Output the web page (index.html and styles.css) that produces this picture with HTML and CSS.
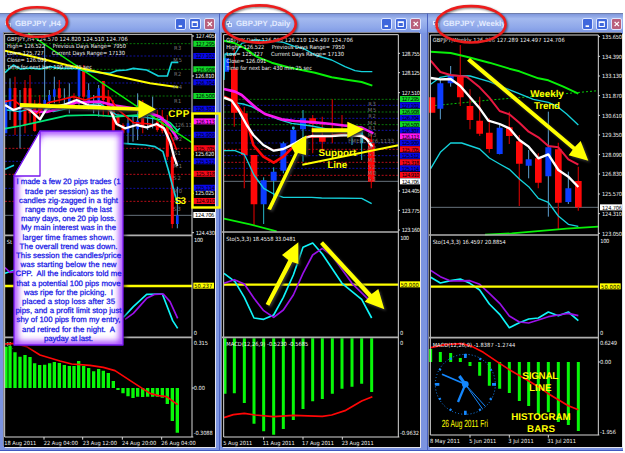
FILE: index.html
```html
<!DOCTYPE html>
<html lang="en">
<head>
<meta charset="utf-8">
<title>GBPJPY charts</title>
<link rel="stylesheet" href="styles.css">
</head>
<body>
<main class="desktop">
<section class="window w1">
<header class="titlebar"><svg class="appicon" viewBox="0 0 8 8"><path d="M1 1h4v2h2v4H3V5H1z" fill="#dfe9ff"/><path d="M2 3l2-1M4 5h2" stroke="#3b5baa" fill="none"/></svg><span class="title">GBPJPY ,H4</span>
<span class="buttons"><i class="btn"><svg viewBox="0 0 11 11"><path d="M3 8h4" stroke-width="2"/></svg></i><i class="btn"><svg viewBox="0 0 11 11"><path d="M2.5 3h6v5.5h-6zM2.5 3.6h6"/></svg></i><i class="btn close"><svg viewBox="0 0 11 11"><path d="M3 3l5 5M8 3l-5 5" stroke-width="1.5"/></svg></i></span></header>
<svg class="chart" viewBox="12 99 633 1242">
<g class="dash green"><path d="M15 131H576M15 208H576M15 288H576"/></g>
<g class="dash blue"><path d="M15 168H576M15 249H576M15 326H576M15 406H576M15 484H576M15 565H576"/></g>
<g class="dash red"><path d="M15 445H576M15 523H576M15 604H576"/></g>
<path class="gridline" d="M15 646H576"/>
<path class="wick" d="M30 235V360M60 270V445M134 130V330M148 270V330M163 230V310M193 265V330M208 250V340M237 200V320M266 250V330M281 285V340M296 255V350M384 350V430M399 350V425M413 280V420M443 320V390M458 290V385M532 560V685"/>
<path class="wickred" d="M45 230V405M75 240V400M90 225V370M104 300V395M119 285V360M178 240V310M222 280V325M251 195V330M310 245V350M325 270V345M340 300V395M354 340V380M369 370V400M428 300V400M472 330V395M487 330V400M502 345V480M517 430V685"/>
<path class="up" d="M18 300V400M30 265V330M60 330V360M134 300V325M148 285V302M163 268V290M208 290V318M237 208V288M266 270V310M296 265V300M384 370V398M413 362V388M532 646V672"/>
<path class="down" d="M45 264V380M75 264V375M90 265V340M104 325V393M119 310V335M178 265V295M251 208V290M310 243V300M325 292V330M340 310V392M354 350V370M369 375V400M428 350V382M472 365V390M487 350V392M502 370V470M517 470V672"/>
<path class="ln cyan" d="M15 218L40 195 62 207 90 204 120 207 150 200 180 205 230 205 250 212 300 218 330 220 350 212 380 210 400 205 440 210 475 228 502 228 515 187 535 187M15 508L42 496M369 430L436 435 465 440 489 455 505 510 517 555 532 610"/>
<path class="ln cyan thin" d="M20 330L60 335 110 320 160 335 230 320 300 310 350 345 420 350 490 360 520 400 540 385"/>
<path class="ln spring" d="M15 386L60 378 110 367 200 347 280 345 350 350 430 344 470 348 510 368 535 395"/>
<path class="ln magenta" d="M70 320L100 335 140 336 180 325 230 307 300 305 340 316 400 325 440 335 480 350 510 378 533 418"/>
<path class="ln red" d="M15 305L40 300 75 325 110 342 145 308 180 300 220 290 255 300 290 290 330 292 350 325 400 368 450 372 490 385 510 400 530 450"/>
<path class="ln white" d="M15 315L40 330 70 320 90 330 120 358 140 325 190 315 230 300 270 318 300 318 330 330 350 372 375 385 410 375 440 382 470 372 492 385 510 425 522 470 532 498"/>
<path d="M85 100L415 322 576 428" class="ln lime thin"/>
<path d="M15 152L100 170 200 195 290 215 380 235 450 250 535 262" class="ln yellow"/>
<g class="lv"><text x="522" y="149" textLength="22">R3</text><text x="520" y="187" textLength="26">M5</text><text x="522" y="227" textLength="22">R2</text><text x="520" y="267" textLength="26">M4</text><text x="522" y="308" textLength="22">R1</text><text x="524" y="382" textLength="52">126.11</text><text x="520" y="423" textLength="26">M2</text><text x="522" y="465" textLength="20">S1</text><text x="520" y="503" textLength="26">M1</text><text x="520" y="541" textLength="22">S2</text><text x="520" y="580" textLength="26">M0</text><text x="520" y="634" textLength="22">S3</text></g>
<g class="info"><text x="21" y="123" textLength="362">GBPJPY,H4  124.570 124.820 124.510 124.706</text><text x="21" y="143" textLength="114">High= 126.522</text><text x="158" y="143" textLength="220">Previous Days Range= 7950</text><text x="21" y="165" textLength="110">Low= 125.727</text><text x="155" y="165" textLength="220">Current Days Range= 17130</text><text x="21" y="187" textLength="120">Close= 126.091</text><text x="21" y="208" textLength="255">Time for next bar: 190 min 25 sec</text><text x="20" y="732">St</text><text x="20" y="1038">M</text></g>
<path d="M60 309L415 322V299L468 328 415 356V332L60 321Z" class="arrow"/>
<text x="505" y="350" class="tag" textLength="63">CPP</text><text x="524" y="613" class="tag" textLength="34">S3</text>
<path d="M18 1025L42 1050" class="ln green dashln"/>
<path d="M15 858H576" class="mid"/>
<path class="ln cyan sto" d="M15 820L42 811M370 952L400 920 440 883 487 882 518 962 533 985"/>
<path class="ln purple sto" d="M15 803L30 817 44 815M375 958L400 940 440 895 465 883 490 882 510 905 533 955"/>
<path class="bars" d="M18 1164V1040M30 1164V1038M45 1164V1057M60 1164V1070M75 1164V1065M90 1164V1071M104 1164V1090M119 1164V1095M134 1164V1094M149 1164V1090M163 1164V1086M178 1164V1089M193 1164V1095M208 1164V1098M222 1164V1098M236 1164V1083M251 1164V1098M266 1164V1104M281 1164V1114M296 1164V1107M310 1164V1112M325 1164V1119M340 1164V1143M354 1164V1170M369 1164V1180M384 1164V1189M399 1164V1194M413 1164V1190M428 1164V1191M443 1164V1190M458 1164V1190M472 1164V1190M487 1164V1193M502 1164V1212M517 1164V1263M532 1164V1298"/>
<path class="ln red sto" d="M15 1032L45 1030 80 1040 120 1065 180 1083 215 1092 270 1096 310 1102 345 1112 400 1148 450 1180 475 1187 500 1190 520 1205 533 1214"/>
<path class="frame" d="M14 1311V103H576V1311M14 1311H580M576 108h6M576 228h6M576 462h6M576 580h6M576 698h6M576 1164h6M132 1311v8M248 1311v8M367 1311v8M485 1311v8"/>
<path class="split" d="M12 706H576M12 1012H576"/>
<g class="box"><path class="bg" d="M580 131h67M580 208h67M580 288h67"/><path class="bb" d="M580 168h67M580 247h67M580 326h67M580 404h67M580 484h67M580 563h67"/><path class="br" d="M580 445h67M580 521h67M580 603h67"/><path class="bm" d="M580 364h67"/><path class="bw" d="M580 645h67"/><path class="by" d="M580 857h62"/></g>
<g class="axis dark"><text x="587" y="138" textLength="58">127.295</text><text x="587" y="175" textLength="58">127.102</text><text x="587" y="215" textLength="58">126.908</text><text x="587" y="254" textLength="58">126.704</text><text x="587" y="295" textLength="58">126.500</text><text x="587" y="333" textLength="58">126.307</text><text x="587" y="371" textLength="58">126.113</text><text x="587" y="411" textLength="58">125.909</text><text x="587" y="452" textLength="58">125.705</text><text x="587" y="491" textLength="58">125.512</text><text x="587" y="528" textLength="58">125.318</text><text x="587" y="570" textLength="58">125.114</text><text x="587" y="610" textLength="58">124.910</text><text x="585" y="652" textLength="58">124.706</text><text x="583" y="864" textLength="54">50.237</text></g>
<g class="axis"><text x="587" y="115" textLength="58">127.405</text><text x="585" y="234" textLength="58">126.810</text><text x="585" y="468" textLength="58">125.620</text><text x="585" y="586" textLength="58">125.025</text><text x="587" y="705" textLength="58">124.430</text><text x="582" y="726" textLength="27">100</text><text x="581" y="1004">0</text><text x="581" y="1034" textLength="43">0.315</text><text x="581" y="1171" textLength="34">0.00</text><text x="581" y="1306" textLength="57">-0.3088</text>
<text x="13" y="1335" textLength="96">18 Aug 2011</text><text x="131" y="1335" textLength="103">22 Aug 04:00</text><text x="248" y="1335" textLength="103">23 Aug 12:00</text><text x="366" y="1335" textLength="103">24 Aug 20:00</text><text x="484" y="1335" textLength="103">26 Aug 04:00</text></g>
</svg>
</section>
<section class="window w2">
<header class="titlebar"><svg class="appicon" viewBox="0 0 8 8"><path d="M1 1h4v2h2v4H3V5H1z" fill="#dfe9ff"/><path d="M2 3l2-1M4 5h2" stroke="#3b5baa" fill="none"/></svg><span class="title">GBPJPY ,Daily</span>
<span class="buttons"><i class="btn"><svg viewBox="0 0 11 11"><path d="M3 8h4" stroke-width="2"/></svg></i><i class="btn"><svg viewBox="0 0 11 11"><path d="M2.5 3h6v5.5h-6zM2.5 3.6h6"/></svg></i><i class="btn close"><svg viewBox="0 0 11 11"><path d="M3 3l5 5M8 3l-5 5" stroke-width="1.5"/></svg></i></span></header>
<svg class="chart" viewBox="21 99 594 1242">
<g class="dash green"><path d="M27 298H550M27 336H550M27 374H550"/></g>
<g class="dash blue"><path d="M27 316H550M27 355H550M27 391H550M27 429H550M27 467H550M27 505H550"/></g>
<g class="dash red"><path d="M27 448H550M27 487H550M27 526H550"/></g>
<path class="gridline" d="M27 544H550"/>
<path class="wickcy" d="M146 532V672M176 502V615M205 425V520M235 380V445M264 330V485M411 385V435M440 385V480"/>
<path class="wickred" d="M58 150V380M88 320V565M117 465V678M293 345V460M322 350V455M352 298V430M381 345V410M469 400V565"/>
<path class="up wide" d="M33 175V215M146 541V613M176 515V542M205 430V512M235 390V440M264 355V388"/>
<path class="down wide" d="M58 208V338M88 340V465M117 465V613M293 355V372M322 405V425M469 430V545"/>
<path class="wickcy thick" d="M235 380V388M440 392V430"/>
<path class="ln cyan thin" d="M27 240L30 162 60 162 80 130 120 120 180 125 205 127 240 140 265 145 300 165 350 180 390 200 420 212 440 215 472 215M55 308L85 312 110 320 150 342 190 358 230 370 290 378 350 390 440 402 470 430M27 452L60 452 88 463 117 525 146 565 176 582 205 592 290 592 320 594 440 595 470 611"/>
<path class="ln lime w6" d="M27 122L60 130 90 145 125 170 170 188 220 202 260 210 300 218 350 232 400 240 440 246 472 257"/>
<path class="ln lime" d="M27 656L105 673 185 694"/>
<path class="ln red w8" d="M27 290L60 305 95 360 115 435 145 470 176 488 205 470 240 435 280 410 350 408 380 402 440 408 472 425"/>
<path class="ln white" d="M27 293L50 302 70 330 95 375 115 405 145 435 176 452 205 447 240 430 265 415 290 408 350 408 390 405 440 408 455 418 472 440"/>
<path class="ln magenta w8" d="M27 267L60 275 80 285 100 303 125 325 150 342 200 358 240 363 300 367 350 372 400 378 440 383 475 400"/>
<g class="lv"><text x="460" y="317" textLength="22">R3</text><text x="458" y="335" textLength="26">M5</text><text x="460" y="354" textLength="22">R2</text><text x="458" y="374" textLength="26">M4</text><text x="460" y="391" textLength="22">R1</text><text x="458" y="411" textLength="26">M3</text><text x="400" y="430" textLength="137">FMEEL 126.1133</text><text x="458" y="450" textLength="26">M2</text><text x="460" y="468" textLength="22">S1</text><text x="458" y="487" textLength="26">M1</text><text x="460" y="506" textLength="22">S2</text><text x="458" y="524" textLength="26">M0</text><text x="460" y="544" textLength="22">S3</text></g>
<g class="info"><text x="34" y="125" textLength="380">GBPJPY,Daily  126.095 126.210 124.497 124.706</text><text x="34" y="146" textLength="114">High= 126.522</text><text x="170" y="146" textLength="219">Previous Days Range= 7950</text><text x="34" y="167" textLength="110">Low= 125.727</text><text x="168" y="167" textLength="219">Current Days Range= 17130</text><text x="34" y="190" textLength="120">Close= 126.091</text><text x="34" y="211" textLength="257">Time for next bar: 430 min 25 sec</text><text x="34" y="724" textLength="208">Sto(5,3,3) 18.4558 33.0481</text></g>
<path d="M262 494L550 436" class="yl w6"/>
<path d="M157 627L239 459 228 438 274 406 273 465 249 459 168 630Z" class="arrow"/>
<path d="M290 385H397V365L447 388 397 414V397H290Z" class="arrow"/>
<g class="tag" text-anchor="middle"><text x="367" y="468" textLength="113">Support</text><text x="367" y="503" textLength="59">Line</text></g>
<path d="M27 854H550" class="mid"/>
<path class="ln cyan sto" d="M27 820L60 845 88 892 117 954 146 958 176 945 205 892 235 825 264 742 293 729 322 762 381 850 440 898 470 954"/>
<path class="ln purple sto" d="M27 850L58 839 88 852 117 895 146 932 176 952 205 930 235 885 264 820 293 765 322 745 352 768 411 850 460 898"/>
<path d="M152 912L220 780 201 765 250 727V792L232 786 163 917Z" class="arrow"/><path d="M324 724L470 882 490 867 508 928 449 905 461 892 315 732Z" class="arrow"/>
<path class="bars wideb" d="M30 1015V1181M58 1015V1180M88 1015V1209M117 1015V1271M146 1015V1294M176 1015V1304M205 1015V1287M235 1015V1260M264 1015V1227M293 1015V1204M322 1015V1197M352 1015V1181M381 1015V1166M411 1015V1160M440 1015V1151M470 1015V1176"/>
<path class="ln red sto" d="M27 1253L55 1244 88 1240 120 1245 175 1250 235 1246 322 1249 350 1245 390 1232 440 1203 472 1190"/>
<text class="info" x="34" y="1038" textLength="246">MACD(12,26,9) -0.5230 -0.5685</text>
<path class="frame" d="M26 1311V104H550V1311M26 1311H553M550 160h5M550 218h5M550 278h5M550 573h5M550 631h5M550 690h5M146 1311v8M264 1311v8M382 1311v8"/>
<path class="split" d="M21 696H550M21 1012H550"/>
<g class="box"><path class="bg" d="M555 297h67M555 335h67M555 373h67"/><path class="bb" d="M555 316h67M555 354h67M555 391h67M555 429h67M555 467h67M555 505h67"/><path class="br" d="M555 448h67M555 487h67M555 525h67"/><path class="bm" d="M555 409h67"/><path class="bw" d="M555 544h67"/><path class="by" d="M555 853h61"/></g>
<g class="axis dark"><text x="560" y="304" textLength="53">127.295</text><text x="560" y="323" textLength="53">127.102</text><text x="560" y="342" textLength="53">126.908</text><text x="560" y="361" textLength="53">126.704</text><text x="560" y="380" textLength="53">126.500</text><text x="560" y="398" textLength="53">126.307</text><text x="560" y="416" textLength="53">126.113</text><text x="560" y="436" textLength="53">125.909</text><text x="560" y="455" textLength="53">125.705</text><text x="560" y="474" textLength="53">125.512</text><text x="560" y="494" textLength="53">125.318</text><text x="560" y="512" textLength="53">125.114</text><text x="560" y="532" textLength="53">124.910</text><text x="560" y="551" textLength="53">124.706</text><text x="557" y="860" textLength="54">50.000</text></g>
<g class="axis"><text x="560" y="167" textLength="55">128.755</text><text x="560" y="225" textLength="55">128.125</text><text x="560" y="285" textLength="55">127.510</text><text x="560" y="580" textLength="55">124.405</text><text x="560" y="638" textLength="55">123.775</text><text x="560" y="697" textLength="55">123.160</text><text x="556" y="719" textLength="26">100</text><text x="555" y="1004">0</text><text x="555" y="1034">0</text><text x="555" y="1306" textLength="57">-0.9632</text>
<text x="25" y="1335" textLength="87">5 Aug 2011</text><text x="143" y="1335" textLength="96">11 Aug 2011</text><text x="261" y="1335" textLength="96">17 Aug 2011</text><text x="380" y="1335" textLength="96">23 Aug 2011</text></g>
</svg>
</section>
<section class="window w3">
<header class="titlebar"><svg class="appicon" viewBox="0 0 8 8"><path d="M1 1h4v2h2v4H3V5H1z" fill="#dfe9ff"/><path d="M2 3l2-1M4 5h2" stroke="#3b5baa" fill="none"/></svg><span class="title">GBPJPY ,Weekly</span>
<span class="buttons"><i class="btn"><svg viewBox="0 0 11 11"><path d="M3 8h4" stroke-width="2"/></svg></i><i class="btn"><svg viewBox="0 0 11 11"><path d="M2.5 3h6v5.5h-6zM2.5 3.6h6"/></svg></i><i class="btn close"><svg viewBox="0 0 11 11"><path d="M3 3l5 5M8 3l-5 5" stroke-width="1.5"/></svg></i></span></header>
<svg class="chart" viewBox="27 99 579 1242">
<path class="gridline" d="M32 622H535"/>
<path class="ln lime thin dashln" d="M32 318L210 300 380 286 535 272"/>
<path class="wick" d="M61 240V358M92 198V260M239 375V463M326 450V535M385 335V650M445 515V612"/>
<path class="wickred" d="M121 135V318M150 268V388M179 290V408M208 355V458M268 335V432M298 405V618M355 460V565M415 428V688M475 500V632"/>
<path class="up wide" d="M61 250V326M92 228V250M239 383V462M326 478V497M385 442V529M445 565V606"/>
<path class="down wide" d="M36 292V338M121 230V292M150 318V360M179 362V401M208 398V447M268 382V408M298 424V491M355 475V548M415 448V608M475 543V622"/>
<path class="ln cyan thin" d="M32 253L61 232 92 226 150 228 208 245 250 262 290 278 340 298 385 307 410 318 440 342 475 375M32 506L61 457 92 429 125 429 179 447 208 474 239 492 268 508 298 537 326 560 355 595 385 607 415 648 445 673 475 679"/>
<path class="ln lime" d="M195 704L275 700 380 691 440 686 535 680"/>
<path class="ln lime w6" d="M32 155L92 159 140 170 208 188 268 206 298 214 355 235 385 241 430 260 475 281"/>
<path class="ln crimson" d="M32 182L61 216 92 225 140 230 179 262 208 293 239 333 268 343 298 368 326 395 355 412 385 438 415 442 445 478 475 494"/>
<path class="ln white" d="M32 234L61 238 92 237 121 258 150 292 179 325 205 362 239 372 268 385 298 420 326 440 355 475 385 463 415 510 445 530 475 561"/>
<text class="info" x="38" y="125" textLength="396">GBPJPY,Weekly  126.236 127.289 124.497 124.706</text>
<path d="M150 174L465 440 482 423 505 482 446 466 458 449 141 182Z" class="arrow"/>
<g class="tag" text-anchor="middle"><text x="381" y="291" textLength="101">Weekly</text><text x="381" y="327" textLength="78">Trend</text></g>
<text class="info" x="38" y="733" textLength="219">Sto(14,3,3) 16.4597 20.8854</text>
<path class="ln cyan sto" d="M32 832L61 849 92 842 121 837 150 850 179 870 208 912 239 943 268 983 298 968 326 957 355 954 385 936 415 947 445 936 475 962"/>
<path class="ln purple sto" d="M32 811L61 830 92 843 150 842 179 853 208 880 239 910 268 948 298 966 326 969 355 960 385 950 415 945 445 940 475 947"/>
<path d="M32 860H535" class="mid"/>
<path class="bars wideb" d="M32 1086V1047M61 1086V1056M92 1086V1059M121 1086V1074M150 1086V1098M179 1086V1127M208 1086V1157M239 1086V1166M268 1086V1179M298 1086V1203M326 1086V1218M355 1086V1242M385 1086V1237M415 1086V1266M445 1086V1275M475 1086V1293"/>
<g class="clock"><circle cx="136" cy="1153" r="90" class="minutes"/><circle cx="136" cy="1153" r="88" class="hours"/><circle cx="136" cy="1153" r="10" class="hub"/><path d="M136 1153L114 1206" stroke-width="7"/><path d="M136 1153L66 1123" stroke-width="5"/><path d="M136 1153L118 1128" stroke-width="9"/><path d="M136 1153L187 1226M136 1153L196 1219" stroke-width="3"/><path d="M136 1062v12M136 1232v12M46 1153h12M216 1153h12" stroke-width="8"/></g>
<path class="ln red sto" d="M32 1043L75 1034 125 1031 155 1039 190 1057 239 1090 268 1109 310 1133 350 1157 385 1181 445 1217 475 1229"/>
<text class="info" x="38" y="1040" textLength="248">MACD(12,26,9) -1.8387 -1.2744</text>
<text x="65" y="1281" class="date" textLength="139" lengthAdjust="spacingAndGlyphs">26 Aug 2011 Fri</text>
<g class="tag" text-anchor="middle"><text x="361" y="1138" textLength="108">SIGNAL</text><text x="361" y="1174" textLength="68">LINE</text><text x="363" y="1261" textLength="178">HISTOGRAM</text><text x="363" y="1296" textLength="84">BARS</text></g>
<path class="frame" d="M31 1305V105H535V1305M31 1305H538M535 110h5M535 169h5M535 228h5M535 287h5M535 346h5M535 405h5M535 464h5M535 522h5M535 582h5M535 641h5M535 700h5M535 1086h5M150 1305v8M268 1305v8M385 1305v8"/>
<path class="split" d="M27 705H535M27 1013H535"/>
<g class="box"><path class="bw" d="M540 622h67"/><path class="by" d="M540 859h62"/></g>
<g class="axis dark"><text x="546" y="629" textLength="60">124.706</text><text x="543" y="866" textLength="56">50.000</text></g>
<g class="axis"><text x="546" y="117" textLength="60">135.650</text><text x="546" y="176" textLength="60">134.390</text><text x="546" y="235" textLength="60">133.130</text><text x="546" y="294" textLength="60">131.870</text><text x="546" y="353" textLength="60">130.610</text><text x="546" y="412" textLength="60">129.350</text><text x="546" y="471" textLength="60">128.090</text><text x="546" y="529" textLength="60">126.830</text><text x="546" y="589" textLength="60">125.570</text><text x="546" y="648" textLength="60">124.310</text><text x="546" y="707" textLength="60">123.050</text><text x="541" y="729" textLength="27">100</text><text x="540" y="1006">0</text><text x="540" y="1034" textLength="51">0.6249</text><text x="540" y="1093" textLength="34">0.00</text><text x="540" y="1301" textLength="48">-1.956</text>
<text x="30" y="1330" textLength="90">8 May 2011</text><text x="148" y="1330" textLength="81">5 Jun 2011</text><text x="265" y="1330" textLength="76">3 Jul 2011</text><text x="382" y="1330" textLength="86">31 Jul 2011</text></g>
</svg>
</section>
<svg class="overlay" viewBox="0 0 625 453">
<defs><filter id="glow" x="-20%" y="-20%" width="140%" height="140%"><feGaussianBlur stdDeviation="3"/></filter><clipPath id="page"><path d="M40 131H123V345H14V176Z"/></clipPath></defs>
<rect x="192.5" y="113.5" width="27.2" height="94" class="yl callout"/>
<g class="ring"><ellipse cx="37" cy="22" rx="30" ry="14.8"/><ellipse cx="259.5" cy="24" rx="36.3" ry="18.6"/><ellipse cx="471" cy="24.3" rx="34.6" ry="18.2"/></g>
<g class="note"><path d="M40 131H123V345H14V176Z" fill="#fff"/><g clip-path="url(#page)"><path d="M40 131H123V345H14V176Z" fill="none" stroke="#9b30ff" stroke-width="7" filter="url(#glow)"/></g><path d="M40 131H123V345H14V176Z" class="edge"/><path d="M40 131V176H14Z" class="edge" fill="#fff"/></g>
<g class="notetext" text-anchor="middle"><text x="68.5" y="184.3" textLength="104">I made a few 20 pips trades (1</text><text x="68.5" y="193.5" textLength="87">trade per session) as the</text><text x="68.5" y="202.7" textLength="99">candles zig-zagged in a tight</text><text x="68.5" y="211.9" textLength="87">range mode over the last</text><text x="68.5" y="221.1" textLength="95">many days, one 20 pip loss.</text><text x="68.5" y="230.3" textLength="95">My main interest was in the</text><text x="68.5" y="239.5" textLength="92">larger time frames shown.</text><text x="68.5" y="248.7" textLength="98">The overall trend was down.</text><text x="68.5" y="257.9" textLength="105">This session the candles/price</text><text x="68.5" y="267.1" textLength="96">was starting below the new</text><text x="68.5" y="276.3" textLength="106" xml:space="preserve">CPP.  All the indicators told me</text><text x="68.5" y="285.5" textLength="104">that a potential 100 pips move</text><text x="68.5" y="294.7" textLength="89" xml:space="preserve">was ripe for the picking.  I</text><text x="68.5" y="303.9" textLength="93">placed a stop loss after 35</text><text x="68.5" y="313.1" textLength="106">pips, and a profit limit stop just</text><text x="68.5" y="322.3" textLength="104">shy of 100 pips from my entry,</text><text x="68.5" y="331.5" textLength="93" xml:space="preserve">and retired for the night.  A</text><text x="68.5" y="340.7" textLength="49">payday at last.</text></g>
</svg>
</main>
</body>
</html>
```

FILE: styles.css
```css
* { box-sizing: border-box; }
body { margin: 0; background: #fff; font-family: "Liberation Sans", Arial, sans-serif; text-rendering: geometricPrecision; }
.desktop { position: relative; width: 625px; height: 453px; padding-top: 13px; display: flex; align-items: flex-start; overflow: hidden; }
.window { height: 438px; background: #7b93e0; border-top: 1px solid #6f7fae; border-bottom: 1px solid #4058c0; display: flex; flex-direction: column; }
.w1 { width: 219px; padding: 0 4px; }
.w2 { width: 208px; padding: 0 7px 0 2px; border-left: 1px solid #4a62c0; }
.w3 { width: 196px; padding: 0 1px; border-left: 1px solid #4a62c0; }
.titlebar { height: 19px; display: flex; align-items: center; margin: 0 -4px; padding: 0 4px; background: linear-gradient(#7f97dc, #a3b9ef 25%, #8fa8ea 70%, #7d98e4); }
.w2 .titlebar { margin: 0 -7px 0 -2px; padding: 0 6px; }
.w3 .titlebar { margin: 0 -1px; padding: 0 1px 0 4px; }
.appicon { width: 8px; height: 8px; margin-right: 3px; }
.w2 .appicon { margin-left: -1px; margin-right: 3px; }
.title { color: #e3ebff; font-weight: bold; font-size: 7.8px; white-space: nowrap; }
.buttons { margin-left: auto; display: flex; gap: 3px; }
.btn { width: 11.5px; height: 12px; border: 1px solid #dde6ff; border-radius: 2px; background: #3f67dc; display: flex; }
.btn svg { width: 100%; height: 100%; fill: none; stroke: #fff; stroke-width: 1.2; }
.close { background: #b9607c; }
.chart { display: block; height: 414px; width: 100%; background: #000; flex: none; box-shadow: 1px 1px 0 #e4e4ec, -1px -1px 0 #85858f; }
.chart text { font-family: "DejaVu Sans Condensed", "DejaVu Sans", sans-serif; font-size: 17px; }
.chart text.tag, .chart .tag text { font: bold 29.5px "Liberation Sans", sans-serif; fill: #ff0; }
.chart text.date { font: 31px "Liberation Sans", sans-serif; fill: #ff0; }
.dash { fill: none; stroke-width: 3; stroke-dasharray: 6 5; }
.dash.green { stroke: #087408; }
.dash.blue { stroke: #1010a0; }
.dash.red { stroke: #b50d18; }
.gridline { stroke: #66717b; stroke-width: 3; }
.wick { stroke: #5d9fd0; stroke-width: 3; }
.wickcy { stroke: #28b6c8; stroke-width: 3; }
.wickcy.thick { stroke-width: 8; }
.wickred { stroke: #b00000; stroke-width: 4; }
.up { stroke: #0c3cff; stroke-width: 8; }
.down { stroke: #ff0808; stroke-width: 9; }
.up.wide { stroke-width: 18; }
.down.wide { stroke-width: 20; }
.ln { fill: none; stroke-width: 5; stroke-linejoin: round; }
.thin { stroke-width: 4; }
.w6 { stroke-width: 6; }
.w8 { stroke-width: 8; }
.sto { stroke-width: 5; }
.dashln { stroke-dasharray: 6 6; stroke-width: 2.5; }
.ln.cyan { stroke: #14d2dc; }
.ln.cyan.sto { stroke: #10f4f8; }
.ln.green { stroke: #0a7a0a; }
.ln.spring { stroke: #00e878; }
.ln.magenta { stroke: #f818f0; stroke-width: 8; }
.ln.red { stroke: #ff0606; }
.ln.crimson { stroke: #e81840; stroke-width: 6; }
.ln.white { stroke: #fff; stroke-width: 7; }
.ln.lime { stroke: #08f008; }
.ln.yellow { stroke: #ff0; stroke-width: 6; }
.ln.purple { stroke: #9a10e8; }
.lv { fill: #777; }
.info, .axis { fill: #f2f2f2; }
.axis.dark { fill: #000; }
.arrow { fill: #ff0; filter: drop-shadow(5px 5px 3px #333); }
.yl { fill: none; stroke: #ff0; }
.mid { stroke: #ff0; stroke-width: 7; }
.bars { stroke: #08f808; stroke-width: 10; }
.bars.wideb { stroke-width: 9; }
.frame { fill: none; stroke: #d8d8d8; stroke-width: 3; }
.split { fill: none; stroke: #b0b0b0; stroke-width: 5; }
.box path { stroke-width: 18; }
.bg { stroke: #10d828; }
.bb { stroke: #0808e8; }
.br { stroke: #f80818; }
.bm { stroke: #ff18f8; }
.bw { stroke: #fff; }
.by { stroke: #ff0; }
.clock { fill: none; stroke: #1488ff; stroke-linecap: butt; }
.clock .minutes { stroke-width: 3; stroke-dasharray: 3 6.42; }
.clock .hours { stroke-width: 7; stroke-dasharray: 6 40.08; stroke-dashoffset: 3; }
.clock .hub { fill: #1488ff; stroke: none; }
.overlay { position: absolute; left: 0; top: 0; width: 625px; height: 453px; }
.callout { stroke-width: 2.4; }
.ring { fill: none; stroke: #ed1c1c; stroke-width: 2.6; filter: drop-shadow(1.5px 1.5px 1px #0008); }
.note { filter: drop-shadow(2px 2px 2px #0009); }
.edge { fill: none; stroke: #7718f0; stroke-width: 1.3; stroke-linejoin: round; }
.note .edge:last-child { fill: #fff; }
.notetext { fill: #1414e6; stroke: #1414e6; stroke-width: .25; font-size: 7.8px; }
```
